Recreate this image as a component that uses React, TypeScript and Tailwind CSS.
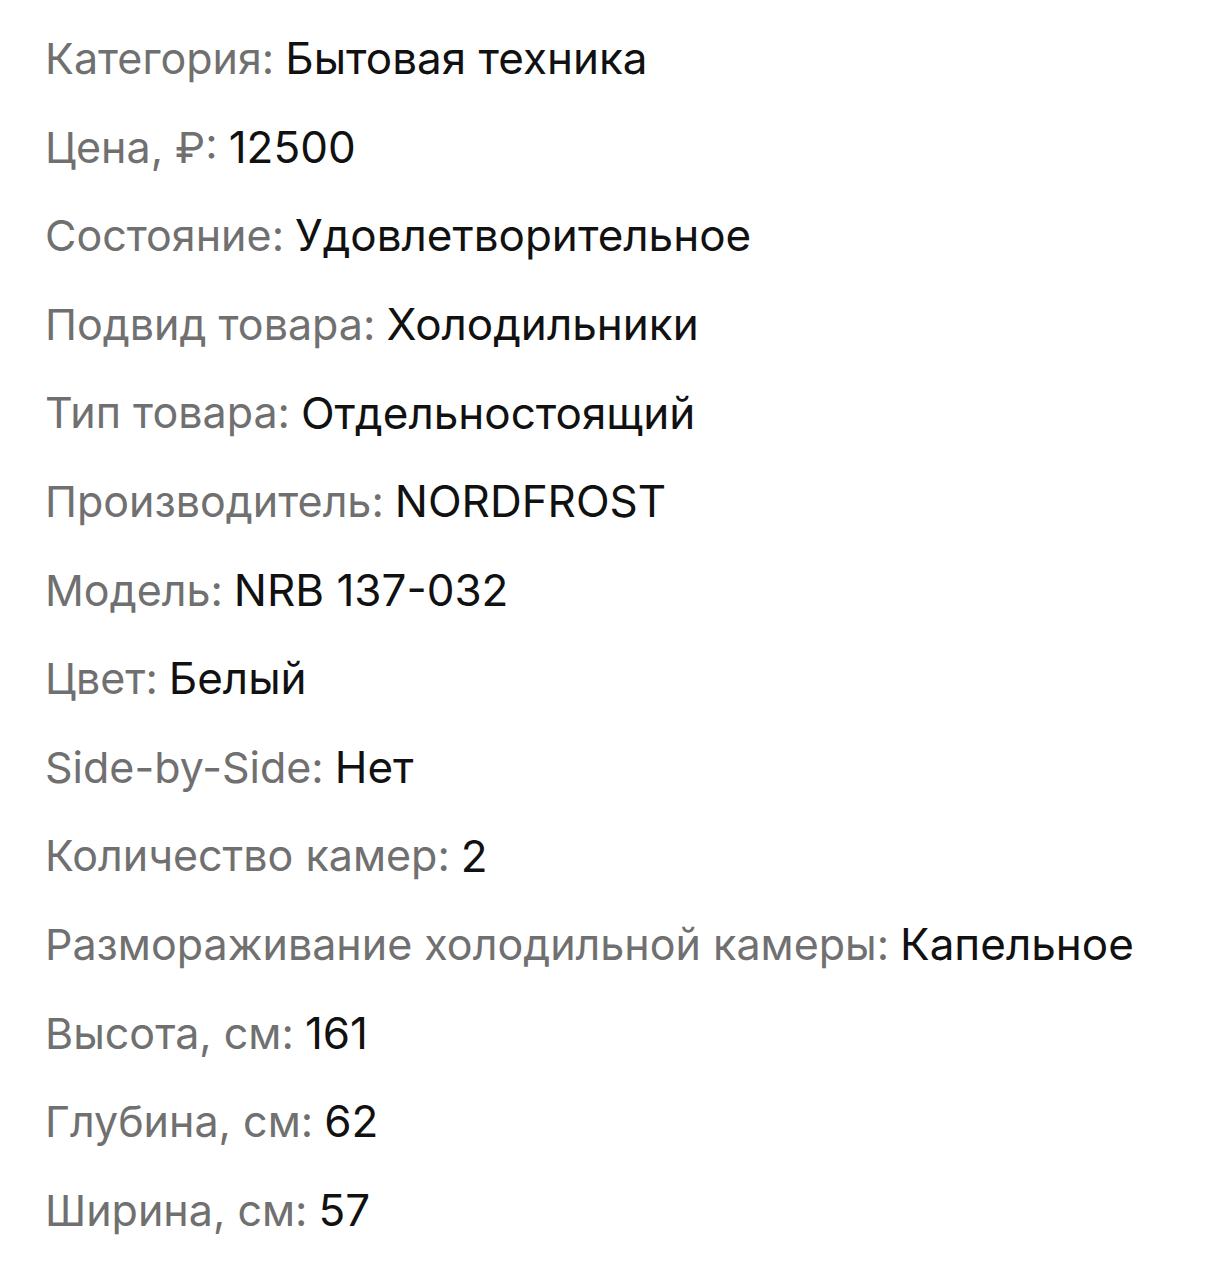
const rows: [string, string][] = [
  ["Категория", "Бытовая техника"],
  ["Цена, ₽", "12500"],
  ["Состояние", "Удовлетворительное"],
  ["Подвид товара", "Холодильники"],
  ["Тип товара", "Отдельностоящий"],
  ["Производитель", "NORDFROST"],
  ["Модель", "NRB 137-032"],
  ["Цвет", "Белый"],
  ["Side-by-Side", "Нет"],
  ["Количество камер", "2"],
  ["Размораживание холодильной камеры", "Капельное"],
  ["Высота, см", "161"],
  ["Глубина, см", "62"],
  ["Ширина, см", "57"],
];

export default function App() {
  return (
    <div className="min-h-[1280px] w-full bg-white pl-[45px] pt-[14px] font-['Inter','Noto_Sans',sans-serif]">
      <dl className="flex flex-col">
        {rows.map(([label, value]) => (
          <div key={label} className="flex h-[88.6px] items-center whitespace-nowrap">
            <dt className="text-[43px] text-[#707070]">{label}:</dt>
            <dd className="ml-[11px] text-[44px] text-[#111]">{value}</dd>
          </div>
        ))}
      </dl>
    </div>
  );
}
